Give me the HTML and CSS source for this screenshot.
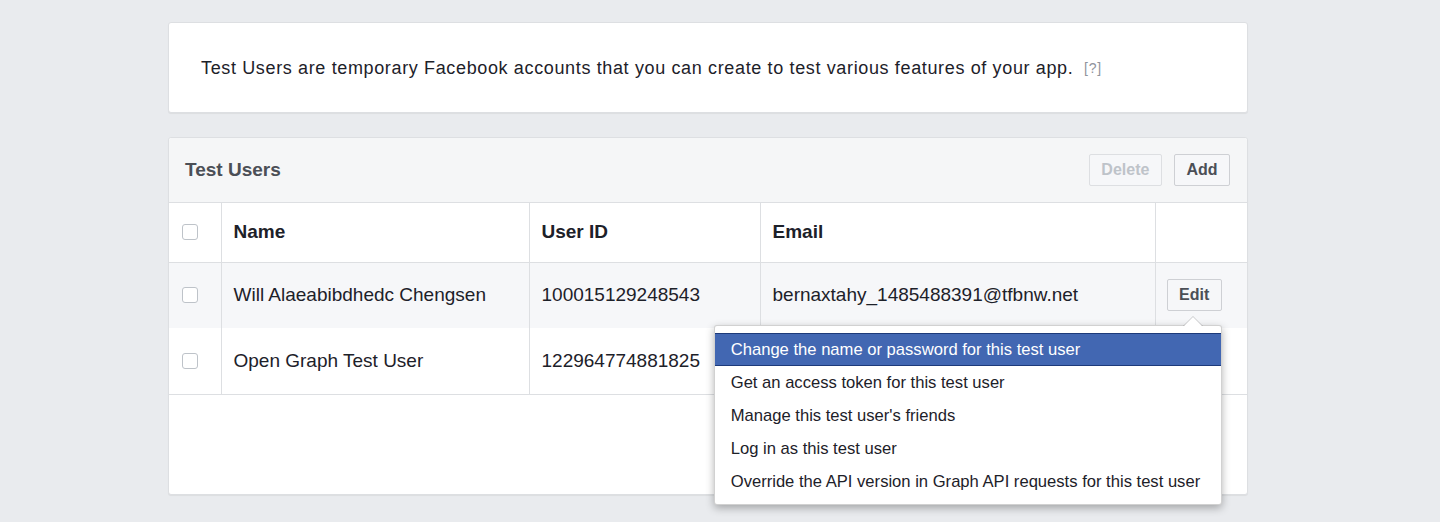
FILE: index.html
```html
<!DOCTYPE html>
<html>
<head>
<meta charset="utf-8">
<title>Test Users</title>
<link rel="stylesheet" href="styles.css">
</head>
<body>
<div class="page">
  <div class="card intro">
    <p class="intro-text">Test Users are temporary Facebook accounts that you can create to test various features of your app. <span class="help">[?]</span></p>
  </div>

  <div class="card users">
    <div class="users-head">
      <h2 class="users-title">Test Users</h2>
      <div class="head-actions">
        <button class="btn btn-disabled">Delete</button>
        <button class="btn">Add</button>
      </div>
    </div>
    <table class="users-table">
      <colgroup>
        <col class="c-check">
        <col class="c-name">
        <col class="c-id">
        <col class="c-email">
        <col class="c-act">
      </colgroup>
      <thead>
        <tr>
          <th class="cell-check"><span class="checkbox"></span></th>
          <th>Name</th>
          <th>User ID</th>
          <th>Email</th>
          <th></th>
        </tr>
      </thead>
      <tbody>
        <tr class="row-hover">
          <td class="cell-check"><span class="checkbox"></span></td>
          <td>Will Alaeabibdhedc Chengsen</td>
          <td>100015129248543</td>
          <td>bernaxtahy_1485488391@tfbnw.net</td>
          <td class="cell-act">
            <div class="edit-wrap">
              <button class="btn">Edit</button>
              <div class="menu">
                <span class="menu-arrow"></span>
                <ul class="menu-list">
                  <li class="menu-item active">Change the name or password for this test user</li>
                  <li class="menu-item">Get an access token for this test user</li>
                  <li class="menu-item">Manage this test user's friends</li>
                  <li class="menu-item">Log in as this test user</li>
                  <li class="menu-item">Override the API version in Graph API requests for this test user</li>
                </ul>
              </div>
            </div>
          </td>
        </tr>
        <tr>
          <td class="cell-check"><span class="checkbox"></span></td>
          <td>Open Graph Test User</td>
          <td>122964774881825</td>
          <td></td>
          <td class="cell-act"></td>
        </tr>
      </tbody>
    </table>
    <div class="users-foot"></div>
  </div>
</div>
</body>
</html>
```

FILE: styles.css
```css
* { box-sizing: border-box; }

html, body {
  margin: 0;
  padding: 0;
  background: #e9ebee;
  font-family: "Liberation Sans", Arial, Helvetica, sans-serif;
  color: #1d2129;
}

.page {
  width: 1080px;
  margin-left: 168px;
  padding-top: 22px;
  padding-bottom: 27px;
  display: flex;
  flex-direction: column;
  gap: 24px;
}

.card {
  background: #fff;
  border: 1px solid #dddfe2;
  border-radius: 3px;
  box-shadow: 0 1px 1px rgba(0, 0, 0, 0.06);
}

.intro {
  height: 91px;
  display: flex;
  align-items: center;
  padding: 0 32px;
}

.intro-text {
  margin: 0;
  font-size: 18px;
  letter-spacing: 0.64px;
  color: #1d2129;
  position: relative;
  top: 1px;
}

.help {
  font-size: 14px;
  letter-spacing: 0.8px;
  color: #90949c;
  margin-left: 5px;
  position: relative;
  top: -1px;
}

.users {
  height: 358px;
  overflow: visible;
  display: flex;
  flex-direction: column;
}

.users-head {
  height: 65px;
  flex: none;
  background: #f5f6f7;
  border-bottom: 1px solid #dddfe2;
  display: flex;
  align-items: center;
  justify-content: space-between;
  padding: 0 17px 0 16px;
  border-radius: 3px 3px 0 0;
}

.users-title {
  margin: 0;
  font-size: 19px;
  font-weight: bold;
  color: #4b4f56;
}

.head-actions {
  display: flex;
  gap: 12px;
}

.btn {
  font-family: "Liberation Sans", Arial, Helvetica, sans-serif;
  font-size: 16px;
  font-weight: bold;
  color: #4b4f56;
  background: #f6f7f9;
  border: 1px solid #ced0d4;
  border-radius: 2px;
  height: 32px;
  padding: 0 11.5px;
  line-height: 30px;
}

.btn-disabled {
  color: #bec3c9;
  border-color: #dddfe2;
  background: #f6f7f9;
}

.users-table {
  width: 100%;
  border-collapse: collapse;
  table-layout: fixed;
  font-size: 19px;
  flex: none;
}

.c-check { width: 52px; }
.c-name { width: 308px; }
.c-id { width: 231px; }
.c-email { width: 395px; }

.users-table th,
.users-table td {
  text-align: left;
  padding: 0 12px;
  border-left: 1px solid #dddfe2;
  vertical-align: middle;
}

.users-table th:first-child,
.users-table td:first-child {
  border-left: none;
}

.users-table thead tr {
  height: 59px;
  border-bottom: 1px solid #dddfe2;
}

.users-table th {
  font-weight: bold;
  color: #1d2129;
}

.users-table tbody tr {
  height: 66px;
}

.users-table tbody tr:last-child {
  border-bottom: 1px solid #dddfe2;
}

.users-table td {
  color: #1d2129;
}

.row-hover td {
  background: #f6f7f9;
}

.cell-check {
  padding: 0 0 0 13px !important;
}

.checkbox {
  display: block;
  width: 16px;
  height: 16px;
  border: 1px solid #bec3c9;
  border-radius: 3px;
  background: #fff;
}

.cell-act {
  padding: 0 11px !important;
}

.edit-wrap {
  position: relative;
  display: inline-block;
  vertical-align: middle;
}

.menu {
  position: absolute;
  top: calc(100% + 14px);
  right: 0;
  width: 508px;
  background: #fff;
  border: 1px solid rgba(0, 0, 0, 0.18);
  border-radius: 3px;
  box-shadow: 0 3px 8px rgba(0, 0, 0, 0.3);
  padding: 7px 0 6px;
  z-index: 5;
}

.menu-arrow {
  position: absolute;
  top: -10px;
  right: 18px;
  width: 0;
  height: 0;
  border-left: 10px solid transparent;
  border-right: 10px solid transparent;
  border-bottom: 10px solid rgba(0, 0, 0, 0.18);
}

.menu-arrow::after {
  content: "";
  position: absolute;
  top: 1px;
  left: -9px;
  border-left: 9px solid transparent;
  border-right: 9px solid transparent;
  border-bottom: 9px solid #fff;
}

.menu-list {
  list-style: none;
  margin: 0;
  padding: 0;
}

.menu-item {
  height: 33px;
  line-height: 31px;
  padding: 0 16px;
  font-size: 16.6px;
  color: #1d2129;
  border-top: 1px solid transparent;
  border-bottom: 1px solid transparent;
  white-space: nowrap;
}

.menu-item.active {
  background: #4267b2;
  color: #fff;
  border-top-color: #1d3a7a;
  border-bottom-color: #1d3a7a;
}

.users-foot {
  flex: 1;
}
```
